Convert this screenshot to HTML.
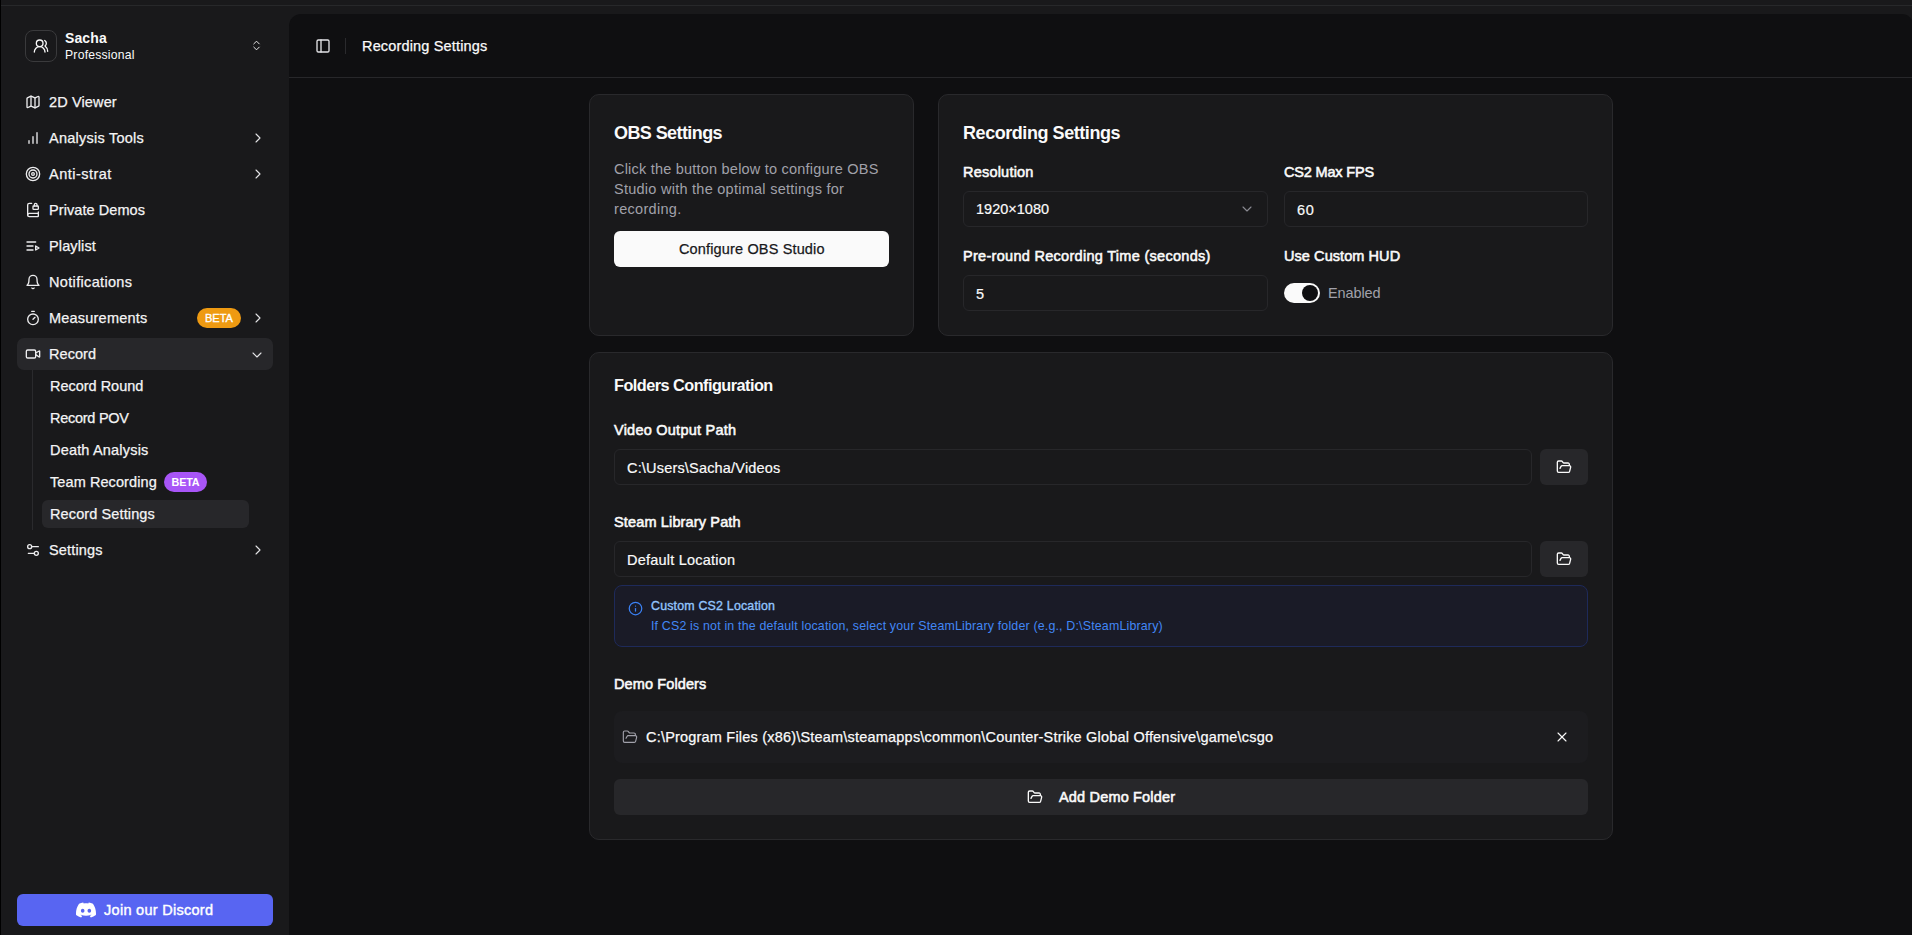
<!DOCTYPE html>
<html lang="en">
<head>
<meta charset="utf-8">
<title>Recording Settings</title>
<style>
*{box-sizing:border-box;margin:0;padding:0}
html,body{width:1912px;height:935px;overflow:hidden;background:#19191b}
body{font-family:"Liberation Sans",sans-serif;color:#fafafa;position:relative;font-size:14.5px}
svg{display:block}
.ic{fill:none;stroke:currentColor;stroke-width:2;stroke-linecap:round;stroke-linejoin:round}
.abs{position:absolute}
#edge{left:0;top:0;width:1px;height:935px;background:#000}
#topline{left:1px;top:5px;width:1911px;height:1px;background:#27282a}
#sb{left:0;top:0;width:289px;height:935px}
.t{position:absolute;white-space:pre;line-height:20px;height:20px}
.m{-webkit-text-stroke:0.25px currentColor}
.mi{position:absolute;left:17px;width:256px;height:32px;border-radius:7px}
.mi .i{position:absolute;left:8px;top:8px;width:16px;height:16px;color:#ececee}
.mi .l{position:absolute;left:32px;top:6px;line-height:20px;font-size:14.5px;color:#f4f4f5;white-space:pre;-webkit-text-stroke:0.25px #f4f4f5}
.mi .c{position:absolute;left:233px;top:8px;width:16px;height:16px;color:#e4e4e7;stroke-width:1.6}
.sub{position:absolute;left:42px;width:207px;height:28px;border-radius:6px}
.sub .l{position:absolute;left:8px;top:4px;line-height:20px;font-size:14.5px;color:#f4f4f5;white-space:pre;-webkit-text-stroke:0.25px #f4f4f5}
.badge{position:absolute;height:20px;border-radius:10px;font-size:10.8px;line-height:20px;text-align:center;color:#fff;font-weight:700;letter-spacing:-0.2px}
#main{left:289px;top:14px;width:1624px;height:930px;background:#0f0f11;border-top-left-radius:12px;border-top-right-radius:11px}
#hdrline{left:289px;top:77px;width:1623px;height:1px;background:#27272a}
.card{position:absolute;background:#19191b;border:1px solid #29292c;border-radius:10px}
.h{position:absolute;white-space:pre;font-weight:700;color:#fafafa}
.lab{position:absolute;white-space:pre;font-weight:400;font-size:14.5px;line-height:20px;color:#fafafa;-webkit-text-stroke:0.55px #fafafa}
.md{-webkit-text-stroke:0.55px currentColor}
.inp{position:absolute;height:36px;border:1px solid #27272a;border-radius:6px;background:#19191b}
.inp span{position:absolute;left:12px;top:8px;line-height:20px;font-size:14.5px;white-space:pre;color:#fafafa;-webkit-text-stroke:0.2px #fafafa}
.fbtn{position:absolute;width:48px;height:36px;border-radius:6px;background:#27272a;color:#fafafa}
.fbtn svg{position:absolute;left:16px;top:10px;width:16px;height:16px}
</style>
</head>
<body>
<div id="sb" class="abs"></div>
<div id="main" class="abs"></div>
<div id="topline" class="abs"></div>
<div id="edge" class="abs"></div>
<div id="hdrline" class="abs"></div>
<!-- user header -->
<div class="abs" style="left:25px;top:30px;width:32px;height:32px;border:1px solid #3a3a3c;border-radius:8px;background:#19191b;color:#fafafa">
  <svg class="ic" viewBox="0 0 24 24" style="position:absolute;left:7px;top:7px;width:16px;height:16px"><path d="M18 21a8 8 0 0 0-16 0"/><circle cx="10" cy="8" r="5"/><path d="M22 20c0-3.37-2-6.5-4-8a5 5 0 0 0-.45-8.3"/></svg>
</div>
<div id="u1" class="t" style="left:65px;top:28px;font-size:14px;font-weight:700;letter-spacing:0.112px">Sacha</div>
<div id="u2" class="t" style="left:65px;top:47px;font-size:12.2px;line-height:16px;height:16px;letter-spacing:0.22px">Professional</div>
<svg class="ic abs" viewBox="0 0 24 24" style="left:250.4px;top:39.4px;width:13px;height:13px;color:#ececee;stroke-width:1.8"><path d="m7 15 5 5 5-5"/><path d="m7 9 5-5 5 5"/></svg>

<!-- menu -->
<div class="mi" style="top:86px"><svg class="ic i" viewBox="0 0 24 24"><path d="M14.106 5.553a2 2 0 0 0 1.788 0l3.659-1.83A1 1 0 0 1 21 4.619v12.764a1 1 0 0 1-.553.894l-4.553 2.277a2 2 0 0 1-1.788 0l-4.212-2.106a2 2 0 0 0-1.788 0l-3.659 1.83A1 1 0 0 1 3 19.381V6.618a1 1 0 0 1 .553-.894l4.553-2.277a2 2 0 0 1 1.788 0z"/><path d="M15 5.764v15"/><path d="M9 3.236v15"/></svg><span id="s1" class="l" style="letter-spacing:0.134px">2D Viewer</span></div>
<div class="mi" style="top:122px"><svg class="ic i" viewBox="0 0 24 24"><line x1="12" x2="12" y1="20" y2="10"/><line x1="18" x2="18" y1="20" y2="4"/><line x1="6" x2="6" y1="20" y2="16"/></svg><span id="s2" class="l" style="letter-spacing:0.238px">Analysis Tools</span><svg class="ic c" viewBox="0 0 24 24"><path d="m9 18 6-6-6-6"/></svg></div>
<div class="mi" style="top:158px"><svg class="ic i" viewBox="0 0 24 24"><circle cx="12" cy="12" r="10"/><circle cx="12" cy="12" r="6"/><circle cx="12" cy="12" r="2"/></svg><span id="s3" class="l" style="letter-spacing:0.476px">Anti-strat</span><svg class="ic c" viewBox="0 0 24 24"><path d="m9 18 6-6-6-6"/></svg></div>
<div class="mi" style="top:194px"><svg class="ic i" viewBox="0 0 24 24"><path d="M18 6V4a2 2 0 1 0-4 0v2"/><path d="M20 15v6a1 1 0 0 1-1 1H6.5a1 1 0 0 1 0-5H20"/><path d="M4 19.5v-15A2.5 2.5 0 0 1 6.5 2H10"/><rect x="12" y="6" width="8" height="5" rx="1"/></svg><span id="s4" class="l" style="letter-spacing:0.076px">Private Demos</span></div>
<div class="mi" style="top:230px"><svg class="ic i" viewBox="0 0 24 24"><path d="M12 12H3"/><path d="M16 6H3"/><path d="M12 18H3"/><path d="m16 12 5 3-5 3v-6Z"/></svg><span id="s5" class="l" style="letter-spacing:0.123px">Playlist</span></div>
<div class="mi" style="top:266px"><svg class="ic i" viewBox="0 0 24 24"><path d="M6 8a6 6 0 0 1 12 0c0 7 3 9 3 9H3s3-2 3-9"/><path d="M10.3 21a1.94 1.94 0 0 0 3.4 0"/></svg><span id="s6" class="l" style="letter-spacing:0.335px">Notifications</span></div>
<div class="mi" style="top:302px"><svg class="ic i" viewBox="0 0 24 24"><line x1="10" x2="14" y1="2" y2="2"/><line x1="12" x2="15" y1="14" y2="11"/><circle cx="12" cy="14" r="8"/></svg><span id="s7" class="l" style="letter-spacing:0.209px">Measurements</span><div class="badge" style="left:180px;top:6px;width:44px;background:#ee9a12;font-weight:400;font-size:11px;letter-spacing:0;-webkit-text-stroke:0.35px #fff">BETA</div><svg class="ic c" viewBox="0 0 24 24"><path d="m9 18 6-6-6-6"/></svg></div>
<div class="mi" style="top:338px;background:#27272a"><svg class="ic i" viewBox="0 0 24 24"><path d="m16 13 5.223 3.482a.5.5 0 0 0 .777-.416V7.87a.5.5 0 0 0-.752-.432L16 10.5"/><rect x="2" y="6" width="14" height="12" rx="2"/></svg><span id="s8" class="l" style="letter-spacing:0.05px">Record</span><svg class="ic c" viewBox="0 0 24 24" style="left:232px;top:8.5px"><path d="m6 9 6 6 6-6"/></svg></div>

<div class="abs" style="left:32px;top:370px;width:1px;height:160px;background:#2a2a2d"></div>
<div class="sub" style="top:372px"><span id="s9" class="l" style="letter-spacing:-0.018px">Record Round</span></div>
<div class="sub" style="top:404px"><span id="s10" class="l" style="letter-spacing:-0.267px">Record POV</span></div>
<div class="sub" style="top:436px"><span id="s11" class="l" style="letter-spacing:0.183px">Death Analysis</span></div>
<div class="sub" style="top:468px"><span id="s12" class="l" style="letter-spacing:0.086px">Team Recording</span><div class="badge" style="left:122px;top:4px;width:43px;background:#a855f7">BETA</div></div>
<div class="sub" style="top:500px;background:#27272a"><span id="s13" class="l" style="letter-spacing:0.116px">Record Settings</span></div>

<div class="mi" style="top:534px"><svg class="ic i" viewBox="0 0 24 24"><path d="M20 7h-9"/><path d="M14 17H5"/><circle cx="17" cy="17" r="3"/><circle cx="7" cy="7" r="3"/></svg><span id="s14" class="l" style="letter-spacing:0.156px">Settings</span><svg class="ic c" viewBox="0 0 24 24"><path d="m9 18 6-6-6-6"/></svg></div>

<!-- discord -->
<div class="abs" style="left:17px;top:894px;width:256px;height:32px;border-radius:6px;background:#5865f2">
  <svg viewBox="0 0 24 24" style="position:absolute;left:59px;top:5.5px;width:20px;height:20px;fill:#fff"><path d="M20.317 4.3698a19.7913 19.7913 0 00-4.8851-1.5152.0741.0741 0 00-.0785.0371c-.211.3753-.4447.8648-.6083 1.2495-1.8447-.2762-3.68-.2762-5.4868 0-.1636-.3933-.4058-.8742-.6177-1.2495a.077.077 0 00-.0785-.037 19.7363 19.7363 0 00-4.8852 1.515.0699.0699 0 00-.0321.0277C.5334 9.0458-.319 13.5799.0992 18.0578a.0824.0824 0 00.0312.0561c2.0528 1.5076 4.0413 2.4228 5.9929 3.0294a.0777.0777 0 00.0842-.0276c.4616-.6304.8731-1.2952 1.226-1.9942a.076.076 0 00-.0416-.1057c-.6528-.2476-1.2743-.5495-1.8722-.8923a.077.077 0 01-.0076-.1277c.1258-.0943.2517-.1923.3718-.2914a.0743.0743 0 01.0776-.0105c3.9278 1.7933 8.18 1.7933 12.0614 0a.0739.0739 0 01.0785.0095c.1202.099.246.1981.3728.2924a.077.077 0 01-.0066.1276 12.2986 12.2986 0 01-1.873.8914.0766.0766 0 00-.0407.1067c.3604.698.7719 1.3628 1.225 1.9932a.076.076 0 00.0842.0286c1.961-.6067 3.9495-1.5219 6.0023-3.0294a.077.077 0 00.0313-.0552c.5004-5.177-.8382-9.6739-3.5485-13.6604a.061.061 0 00-.0312-.0286zM8.02 15.3312c-1.1825 0-2.1569-1.0857-2.1569-2.419 0-1.3332.9555-2.4189 2.157-2.4189 1.2108 0 2.1757 1.0952 2.1568 2.419 0 1.3332-.9555 2.4189-2.1569 2.4189zm7.9748 0c-1.1825 0-2.1569-1.0857-2.1569-2.419 0-1.3332.9554-2.4189 2.1569-2.4189 1.2108 0 2.1757 1.0952 2.1568 2.419 0 1.3332-.946 2.4189-2.1568 2.4189Z"/></svg>
  <div id="d1" class="t"  style="left:87px;top:6px;font-size:14.5px;color:#fff;-webkit-text-stroke:0.42px #fff;letter-spacing:0.282px">Join our Discord</div>
</div>
<!-- top header -->
<svg class="ic abs" viewBox="0 0 24 24" style="left:315px;top:38px;width:16px;height:16px;color:#e4e4e7"><rect width="18" height="18" x="3" y="3" rx="2"/><path d="M9 3v18"/></svg>
<div class="abs" style="left:345px;top:38px;width:1px;height:16px;background:#2a2a2d"></div>
<div id="m1" class="t m" style="left:362px;top:36px;font-size:14.5px;letter-spacing:0.164px">Recording Settings</div>

<!-- OBS card -->
<div class="card" style="left:589px;top:94px;width:325px;height:242px"></div>
<div id="m2" class="h" style="left:614px;top:121px;font-size:18px;line-height:24px;letter-spacing:-0.583px">OBS Settings</div>
<div id="m3" class="t" style="left:614px;top:159px;font-size:14.5px;color:#a1a1aa;letter-spacing:0.213px">Click the button below to configure OBS</div>
<div id="m4" class="t" style="left:614px;top:179px;font-size:14.5px;color:#a1a1aa;letter-spacing:0.259px">Studio with the optimal settings for</div>
<div id="m5" class="t" style="left:614px;top:199px;font-size:14.5px;color:#a1a1aa;letter-spacing:0.302px">recording.</div>
<div class="abs" style="left:614px;top:231px;width:275px;height:36px;border-radius:6px;background:#fafafa"></div>
<div id="m6" class="t m" style="left:679px;top:239px;font-size:14.5px;color:#18181b;letter-spacing:0.149px">Configure OBS Studio</div>

<!-- Recording card -->
<div class="card" style="left:938px;top:94px;width:675px;height:242px"></div>
<div id="m7" class="h" style="left:963px;top:121px;font-size:18px;line-height:24px;letter-spacing:-0.442px">Recording Settings</div>
<div id="m8" class="lab" style="left:963px;top:162px;letter-spacing:0.209px">Resolution</div>
<div class="inp" style="left:963px;top:191px;width:305px"><span id="m9" style="top:6.5px;letter-spacing:0.014px">1920×1080</span><svg class="ic" viewBox="0 0 24 24" style="position:absolute;left:275px;top:9px;width:16px;height:16px;color:#8a8a92;stroke-width:1.7"><path d="m6 9 6 6 6-6"/></svg></div>
<div id="m10" class="lab" style="left:1284px;top:162px;letter-spacing:-0.176px">CS2 Max FPS</div>
<div class="inp" style="left:1284px;top:191px;width:304px"><span id="m11" style="letter-spacing:0.7px">60</span></div>
<div id="m12" class="lab" style="left:963px;top:246px;letter-spacing:0.292px">Pre-round Recording Time (seconds)</div>
<div class="inp" style="left:963px;top:275px;width:305px"><span>5</span></div>
<div id="m13" class="lab" style="left:1284px;top:246px;letter-spacing:0.068px">Use Custom HUD</div>
<div class="abs" style="left:1284px;top:283px;width:36px;height:20px;border-radius:10px;background:#fafafa"><div style="position:absolute;left:18px;top:2px;width:16px;height:16px;border-radius:8px;background:#0f0f11"></div></div>
<div id="m14" class="t" style="left:1328px;top:283px;font-size:14.5px;color:#a1a1aa;letter-spacing:-0.12px">Enabled</div>

<!-- Folders card -->
<div class="card" style="left:589px;top:352px;width:1024px;height:488px"></div>
<div id="m15" class="h" style="left:614px;top:372.5px;font-size:16.3px;line-height:24px;letter-spacing:-0.537px">Folders Configuration</div>
<div id="m16" class="lab" style="left:614px;top:420px;letter-spacing:0.241px">Video Output Path</div>
<div class="inp" style="left:614px;top:449px;width:918px"><span id="m17" style="letter-spacing:0.183px">C:\Users\Sacha/Videos</span></div>
<div class="fbtn" style="left:1540px;top:449px"><svg class="ic" viewBox="0 0 24 24"><path d="m6 14 1.5-2.900A2 2 0 0 1 9.240 10H20a2 2 0 0 1 1.940 2.500l-1.540 6a2 2 0 0 1-1.950 1.500H4a2 2 0 0 1-2-2V5a2 2 0 0 1 2-2h3.900a2 2 0 0 1 1.690.900l.810 1.200a2 2 0 0 0 1.670.900H18a2 2 0 0 1 2 2v2"/></svg></div>
<div id="m18" class="lab" style="left:614px;top:512px;letter-spacing:0.146px">Steam Library Path</div>
<div class="inp" style="left:614px;top:541px;width:918px"><span id="m19" style="letter-spacing:0.22px">Default Location</span></div>
<div class="fbtn" style="left:1540px;top:541px"><svg class="ic" viewBox="0 0 24 24"><path d="m6 14 1.500-2.900A2 2 0 0 1 9.240 10H20a2 2 0 0 1 1.940 2.500l-1.540 6a2 2 0 0 1-1.950 1.500H4a2 2 0 0 1-2-2V5a2 2 0 0 1 2-2h3.900a2 2 0 0 1 1.690.900l.810 1.200a2 2 0 0 0 1.670.900H18a2 2 0 0 1 2 2v2"/></svg></div>

<!-- info alert -->
<div class="abs" style="left:614px;top:585px;width:974px;height:62px;border:1px solid #1e2a5a;border-radius:8px;background:#1a1b27"></div>
<svg class="ic abs" viewBox="0 0 24 24" style="left:627.6px;top:600.5px;width:15px;height:15px;color:#3b82f6"><circle cx="12" cy="12" r="10"/><path d="M12 16v-4"/><path d="M12 8h.01"/></svg>
<div id="m20" class="t" style="left:651px;top:596px;font-size:12.4px;-webkit-text-stroke:0.35px #93c5fd;color:#93c5fd;letter-spacing:0.193px">Custom CS2 Location</div>
<div id="m21" class="t" style="left:651px;top:616px;font-size:12.4px;color:#4287f5;letter-spacing:0.177px">If CS2 is not in the default location, select your SteamLibrary folder (e.g., D:\SteamLibrary)</div>

<div id="m22" class="lab" style="left:614px;top:674px;letter-spacing:0.112px">Demo Folders</div>
<div class="abs" style="left:614px;top:711px;width:974px;height:52px;border-radius:8px;background:#1c1c1f"></div>
<svg class="ic abs" viewBox="0 0 24 24" style="left:622px;top:729px;width:16px;height:16px;color:#a1a1aa;stroke-width:1.7"><path d="m6 14 1.500-2.900A2 2 0 0 1 9.240 10H20a2 2 0 0 1 1.940 2.500l-1.540 6a2 2 0 0 1-1.950 1.500H4a2 2 0 0 1-2-2V5a2 2 0 0 1 2-2h3.900a2 2 0 0 1 1.690.900l.810 1.200a2 2 0 0 0 1.670.900H18a2 2 0 0 1 2 2v2"/></svg>
<div id="m23" class="t m" style="left:646px;top:727px;font-size:14.5px;letter-spacing:0.2px">C:\Program Files (x86)\Steam\steamapps\common\Counter-Strike Global Offensive\game\csgo</div>
<svg class="ic abs" viewBox="0 0 24 24" style="left:1554px;top:729px;width:16px;height:16px;color:#fafafa;stroke-width:1.6"><path d="M18 6 6 18"/><path d="m6 6 12 12"/></svg>

<div class="abs" style="left:614px;top:779px;width:974px;height:36px;border-radius:6px;background:#27272a"></div>
<svg class="ic abs" viewBox="0 0 24 24" style="left:1027px;top:789px;width:16px;height:16px;color:#fafafa"><path d="m6 14 1.500-2.900A2 2 0 0 1 9.240 10H20a2 2 0 0 1 1.940 2.500l-1.540 6a2 2 0 0 1-1.950 1.500H4a2 2 0 0 1-2-2V5a2 2 0 0 1 2-2h3.900a2 2 0 0 1 1.690.900l.810 1.200a2 2 0 0 0 1.670.900H18a2 2 0 0 1 2 2v2"/></svg>
<div id="m24" class="t md" style="left:1059px;top:787px;font-size:14.5px;letter-spacing:0.169px">Add Demo Folder</div>

</body>
</html>
